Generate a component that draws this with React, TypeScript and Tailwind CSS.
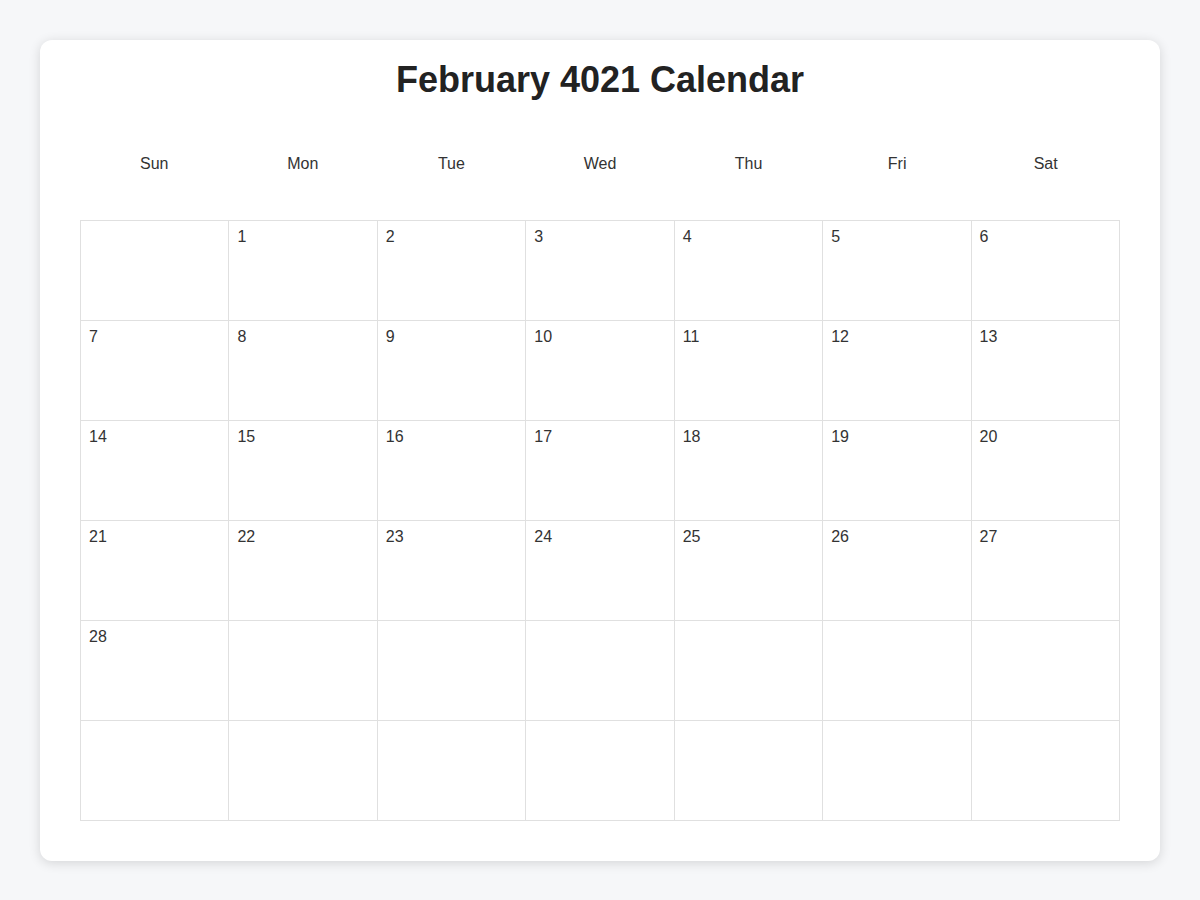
const days = ['Sun', 'Mon', 'Tue', 'Wed', 'Thu', 'Fri', 'Sat'];

// Feb 4021 starts on a Monday; 6 rows of 7
const cells: (number | null)[] = Array.from({ length: 42 }, (_, i) => (i >= 1 && i <= 28 ? i : null));

export default function App() {
  return (
    <div className="min-h-screen w-full bg-[#f6f7f9] p-10 font-['Liberation_Sans',Arial,sans-serif] text-[#333]">
      <div className="rounded-xl bg-white px-10 pb-10 pt-5 shadow-[0_2px_12px_rgba(0,0,0,0.14)]">
        <h1 className="text-center text-[36px] font-bold leading-10 text-[#222]">February 4021 Calendar</h1>
        <div className="mt-[44px] mb-[36px] grid grid-cols-7">
          {days.map((d) => (
            <div key={d} className="text-center text-base leading-10">
              {d}
            </div>
          ))}
        </div>
        <div className="grid grid-cols-7 border-l border-t border-[#e0e0e0]">
          {cells.map((n, i) => (
            <div key={i} className="h-[100px] border-b border-r border-[#e0e0e0] px-2 pt-[7px] text-base leading-[1.15]">
              {n ?? ''}
            </div>
          ))}
        </div>
      </div>
    </div>
  );
}
